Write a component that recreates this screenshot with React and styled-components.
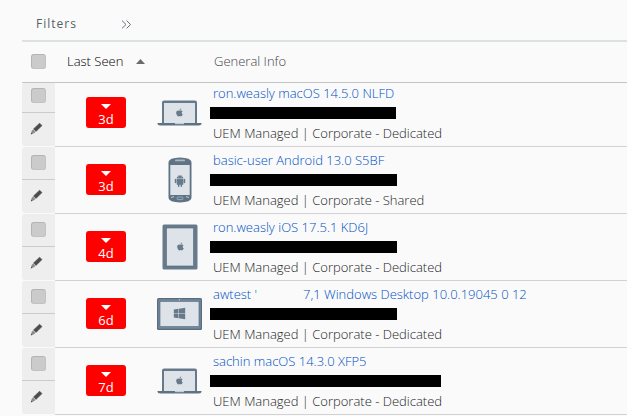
import React from 'react';
import styled, { createGlobalStyle } from 'styled-components';
import { FaApple, FaWindows } from 'react-icons/fa';
import { AiFillAndroid } from 'react-icons/ai';

const devices = [
  { id: 1, lastSeen: '3d', kind: 'laptop', title: 'ron.weasly macOS 14.5.0 NLFD', ownership: 'Corporate - Dedicated', redacted: 186 },
  { id: 2, lastSeen: '3d', kind: 'phone', title: 'basic-user Android 13.0 S5BF', ownership: 'Corporate - Shared', redacted: 187 },
  { id: 3, lastSeen: '4d', kind: 'tablet', title: 'ron.weasly iOS 17.5.1 KD6J', ownership: 'Corporate - Dedicated', redacted: 187 },
  { id: 4, lastSeen: '6d', kind: 'desktop', title: 'awtest \'', titleEnd: '7,1 Windows Desktop 10.0.19045 0 12', ownership: 'Corporate - Dedicated', redacted: 187 },
  { id: 5, lastSeen: '7d', kind: 'laptop', title: 'sachin macOS 14.3.0 XFP5', ownership: 'Corporate - Dedicated', redacted: 231 },
];

const GlobalStyle = createGlobalStyle`
  * {
    box-sizing: border-box;
  }

  body {
    margin: 0;
    overflow: hidden;
    background: #fafafa;
    color: #1c1d1f;
    font: 300 13px/20px 'Open Sans', 'Noto Sans', sans-serif;
  }

  button {
    padding: 0;
    border: 0;
    background: none;
    color: inherit;
    font: inherit;
  }
`;

const Page = styled.main`
  padding-left: 22px;
`;

const FilterBar = styled.div`
  display: flex;
  align-items: center;
  gap: 44px;
  height: 42px;
  padding: 8px 14px 0;
  border-bottom: 2px solid #dce2e3;
`;

const FilterLabel = styled.span`
  color: #565f66;
  font-size: 12px;
  font-weight: 400;
  letter-spacing: 1px;
`;

const IconButton = styled.button`
  display: flex;
  align-items: center;
  justify-content: center;
`;

const Table = styled.table`
  width: 100%;
  table-layout: fixed;
  border-collapse: separate;
  border-spacing: 0;
`;

const HeadCell = styled.th`
  width: ${props => (props.$width ? `${props.$width}px` : 'auto')};
  height: 41px;
  padding: 0 0 2px ${props => props.$indent || 0}px;
  border-bottom: 1px solid #c4c4c4;
  color: #444;
  font-weight: 300;
  text-align: left;
`;

const SortButton = styled.button`
  display: flex;
  align-items: center;
  gap: 13px;
  color: #000;
  white-space: nowrap;
`;

const CheckLabel = styled.label`
  display: flex;
`;

const Checkbox = styled.input.attrs({ type: 'checkbox' })`
  appearance: none;
  width: 15px;
  height: 15px;
  margin: 0;
  border: 1px solid #c2c2c2;
  border-top-color: #b4b4b4;
  border-left-color: #b4b4b4;
  border-radius: 3px;
  background: #cbcbcb;
`;

const Cell = styled.td`
  height: 67px;
  padding: 0;
  border-bottom: 1px solid #d2d2d2;
  vertical-align: bottom;
`;

const GutterCell = styled(Cell)`
  border-bottom-color: #fafafa;
`;

const Row = styled.tr`
  &:first-child ${Cell} {
    height: 64px;
  }
`;

const Gutter = styled.div`
  border-radius: 3px 0 0 3px;
  background: #eee;
`;

const GutterSlot = styled.div`
  display: flex;
  align-items: flex-end;
  height: ${props => (props.$first ? 29 : 32)}px;
  padding: 0 0 9px 9px;

  & + & {
    height: 34px;
    padding: 0 0 11px 8px;
    border-top: 1px solid #ccc;
  }
`;

const LastSeen = styled.div`
  display: flex;
  flex-direction: column;
  align-items: center;
  width: 40px;
  height: 31px;
  margin: 0 0 18px 31px;
  padding-top: 7px;
  border-radius: 3px;
  background: #fe0000;
  color: #fff;
  font-weight: 400;

  svg {
    flex: none;
  }
`;

const DeviceIcon = styled.div`
  display: flex;
  align-items: center;
  justify-content: center;
  height: 63px;
  padding-bottom: 3px;
`;

const Info = styled.div`
  padding: 0 0 3px 1px;
  white-space: nowrap;
`;

const DeviceLink = styled.a`
  display: block;
  color: #0050c4;
  text-decoration: none;
`;

const Blank = styled.span`
  display: inline-block;
  width: 46px;
`;

const RedactedLine = styled.div`
  display: flex;
  align-items: center;
  height: 20px;
  margin-left: -3px;
`;

const Redaction = styled.div`
  width: ${props => props.$width}px;
  height: 12px;
  background: #000;
`;

const Pencil = () => (
  <svg width="13" height="13" viewBox="0 0 13 13">
    <path d="M9.6 1.2 L12 3.6 L6 9.4 L3.5 7 Z" fill="#4c4c4c" stroke="#4c4c4c" strokeLinejoin="round" strokeWidth=".6" />
    <path d="M3 7.5 L5.4 9.9 L4 11.2 L.9 12.3 L1.7 9 Z" fill="#8a8a8a" />
    <path d="M1.3 10.6 L2.5 11.8 L.8 12.4 Z" fill="#4c4c4c" />
  </svg>
);

const Laptop = () => (
  <svg width="45" height="26" viewBox="0 0 45 26">
    <path d="M7 .5 H38 Q40 .5 40 2.5 V24 H5 V2.5 Q5 .5 7 .5 Z" fill="#667a8b" />
    <path d="M7 3 H38 V23 H7 Z" fill="#dde3e8" />
    <path d="M.5 23 H44.5 V24 Q44 25.5 41 25.5 H4 Q1 25.5 .5 24 Z" fill="#5d7285" />
    <path d="M18 23 H27 V24.2 H18 Z" fill="#c3ccd4" />
    <FaApple x="18" y="8" size="9" color="#667a8b" />
  </svg>
);

const Phone = () => (
  <svg width="24" height="46" viewBox="0 0 24 46">
    <path d="M.5 5 Q1 .8 12 .5 Q23 .8 23.5 5 V41 Q23 45.2 12 45.5 Q1 45.2 .5 41 Z" fill="#5f7385" />
    <path d="M2.3 8 H21.7 V38 H2.3 Z" fill="#dde3e8" />
    <rect x="7" y="2.5" width="10" height="1.8" rx=".9" fill="#aab7c2" />
    <path d="M3 40.5 L6 39.6 M18 39.6 L21 40.5" stroke="#c3ccd4" />
    <rect x="9" y="40" width="6" height="2.6" rx="1.2" fill="#5f7385" stroke="#b8c3cc" strokeWidth=".7" />
    <AiFillAndroid x="5" y="17" size="14" color="#667a8b" />
  </svg>
);

const Tablet = () => (
  <svg width="36" height="46" viewBox="0 0 36 46">
    <rect x=".5" y=".5" width="35" height="45" rx="1.5" fill="#667a8b" />
    <rect x="4.5" y="4" width="27" height="38" fill="#dde3e8" stroke="#526779" strokeWidth=".6" />
    <FaApple x="14" y="18" size="9" color="#667a8b" />
  </svg>
);

const Desktop = () => (
  <svg width="45" height="32" viewBox="0 0 45 32">
    <rect width="45" height="32" rx="1.5" fill="#586d7f" />
    <rect x="1.2" y="1.2" width="42.6" height="29.6" rx="1" fill="#71879a" />
    <rect x="3" y="3.4" width="39" height="25.2" fill="#dde3e8" stroke="#526779" strokeWidth=".6" />
    <circle cx="22.5" cy="1.8" r=".7" fill="#c3ccd4" />
    <FaWindows x="16" y="9" size="13" color="#667a8b" />
  </svg>
);

const deviceIcons = { laptop: Laptop, phone: Phone, tablet: Tablet, desktop: Desktop };

const DeviceRow = ({ device, first }) => {
  const Icon = deviceIcons[device.kind];

  return (
    <Row>
      <GutterCell>
        <Gutter>
          <GutterSlot $first={first}>
            <CheckLabel><Checkbox aria-label={`Select ${device.title}`} /></CheckLabel>
          </GutterSlot>
          <GutterSlot>
            <IconButton type="button" aria-label={`Edit ${device.title}`}><Pencil /></IconButton>
          </GutterSlot>
        </Gutter>
      </GutterCell>
      <Cell>
        <LastSeen>
          <svg width="10" height="5" viewBox="0 0 10 5"><path d="M0 0 H10 L5 5 Z" fill="#fff" /></svg>
          {device.lastSeen}
        </LastSeen>
      </Cell>
      <Cell><DeviceIcon><Icon /></DeviceIcon></Cell>
      <Cell>
        <Info>
          <DeviceLink href="#">
            {device.title}
            {device.titleEnd && <Blank />}
            {device.titleEnd}
          </DeviceLink>
          <RedactedLine><Redaction $width={device.redacted} /></RedactedLine>
          <div>UEM Managed | {device.ownership}</div>
        </Info>
      </Cell>
    </Row>
  );
};

const App = () => (
  <Page>
    <GlobalStyle />
    <FilterBar>
      <FilterLabel>Filters</FilterLabel>
      <IconButton type="button" aria-label="Expand filters">
        <svg width="11" height="9" viewBox="0 0 11 9" fill="none" stroke="#66727c">
          <path d="M1 .6 L5 4.5 L1 8.4 M5.6 .6 L9.6 4.5 L5.6 8.4" />
        </svg>
      </IconButton>
    </FilterBar>
    <Table>
      <thead>
        <tr>
          <HeadCell $width={33} $indent={9}>
            <CheckLabel><Checkbox aria-label="Select all devices" /></CheckLabel>
          </HeadCell>
          <HeadCell $width={92} $indent={12}>
            <SortButton type="button">
              Last Seen
              <svg width="9" height="5" viewBox="0 0 9 5"><path d="M0 5 H9 L4.5 0 Z" fill="#6b6b6b" /></svg>
            </SortButton>
          </HeadCell>
          <HeadCell $width={65} aria-label="Device" />
          <HeadCell $indent={2}>General Info</HeadCell>
        </tr>
      </thead>
      <tbody>
        {devices.map((device, index) => (
          <DeviceRow key={device.id} device={device} first={index === 0} />
        ))}
      </tbody>
    </Table>
  </Page>
);

export default App;
